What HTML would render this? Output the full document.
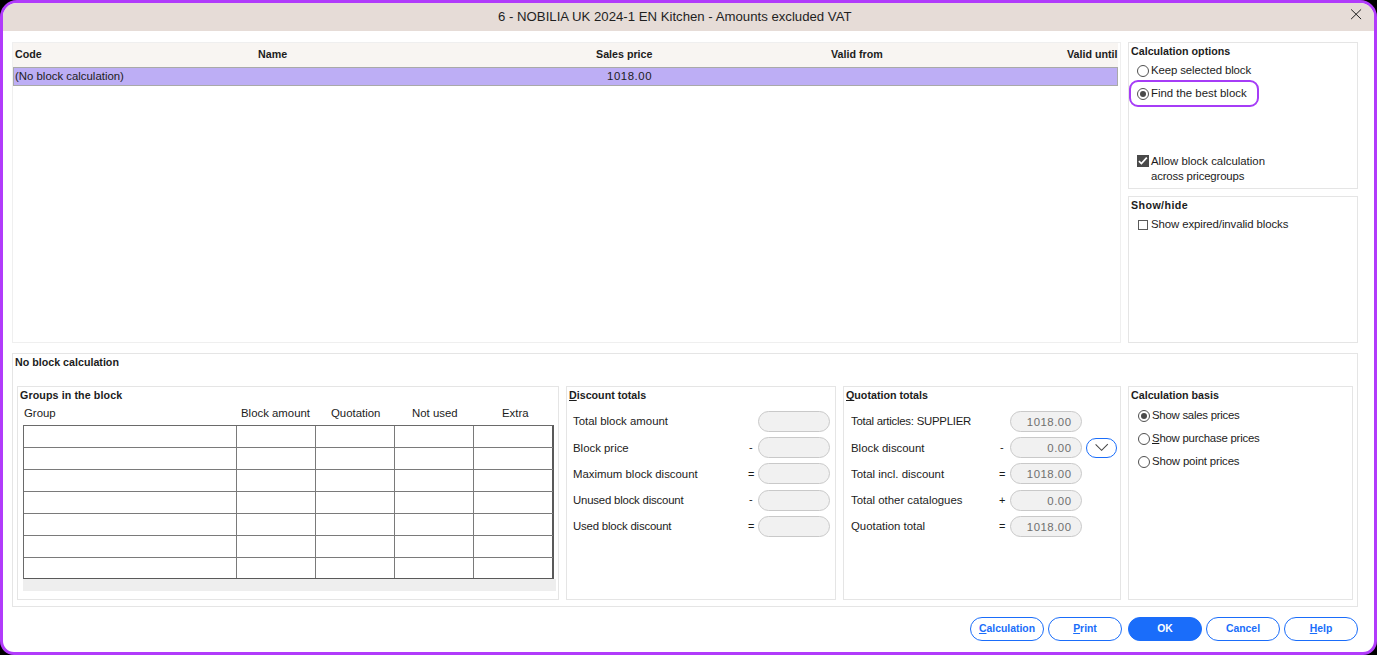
<!DOCTYPE html>
<html><head><meta charset="utf-8">
<style>
*{box-sizing:border-box;margin:0;padding:0}
html,body{width:1377px;height:655px;overflow:hidden;background:#000}
body{font-family:"Liberation Sans",sans-serif;color:#1c1c1c;font-size:11.4px;position:relative}
.dlg{position:absolute;left:0;top:0;width:1377px;height:655px;border:3px solid #b13bfb;border-radius:17px 17px 14px 14px;background:#fff;overflow:hidden}
.a{position:absolute;white-space:nowrap}
.title{position:absolute;left:0;top:0;width:1371px;height:28px;background:#e6dcd7}
.ttl{position:absolute;top:6px;left:495px;font-size:13.2px;color:#1f1f1f;line-height:15px}
.pnl{position:absolute;border:1px solid #e5e5e5}
.b{font-weight:bold;font-size:10.7px}
u{text-decoration-skip-ink:none}
.hdr{position:absolute;left:10px;top:40px;width:1105px;height:24px;background:#f8f5f2}
.sel{position:absolute;left:10px;top:64px;width:1105px;height:19px;background:#bdaef5;border:1px solid #a9a9a9}
.radio{position:absolute;width:12px;height:12px;border:1px solid #505050;border-radius:50%;background:#fff}
.radio.on::after{content:"";position:absolute;left:2px;top:2px;width:6px;height:6px;border-radius:50%;background:#4a4a4a}
.chk{position:absolute;width:11px;height:11px;border:1px solid #3a3a3a;background:#fff}
.inp{position:absolute;width:72px;height:21px;border:1px solid #c9c9c9;border-radius:11px;background:#f1f1f1;color:#6f6f6f;text-align:right;padding-right:9.5px;line-height:21px;font-size:11.4px;letter-spacing:0.5px}
.op{position:absolute;font-size:11px}
.btn{position:absolute;top:614px;width:74px;height:24px;border:1px solid #1a6dfa;border-radius:12px;color:#1a6dfa;font-weight:bold;text-align:center;line-height:22px;font-size:10.4px;background:#fff}
.btn.pri{background:#1a6dfa;color:#fff}
.grid{position:absolute;left:20px;top:422px;width:531px;height:154px;border-left:1px solid #6a6a6a;border-top:1px solid #6a6a6a;border-right:2px solid #5a5a5a;border-bottom:1px solid #5a5a5a}
.hl{position:absolute;left:0;width:529px;height:1px;background:#7a7a7a}
.vl{position:absolute;top:0;width:1px;height:152px;background:#7a7a7a}
</style></head><body>
<div class="dlg">
  <div class="title"><div class="ttl">6 - NOBILIA UK 2024-1 EN Kitchen - Amounts excluded VAT</div>
    <svg class="a" style="left:1347px;top:5px" width="12" height="12" viewBox="0 0 12 12"><path d="M1.1 1.4L11.1 11.1M11.1 1.4L1.1 11.1" stroke="#1e1e1e" stroke-width="1"/></svg>
  </div>

  <!-- top table -->
  <div class="pnl" style="left:9px;top:39px;width:1109px;height:301px;border-color:#efefef"></div>
  <div class="hdr"></div>
  <div class="a b" style="left:12px;top:45px">Code</div>
  <div class="a b" style="left:255px;top:45px">Name</div>
  <div class="a b" style="left:593px;top:45px">Sales price</div>
  <div class="a b" style="left:828px;top:45px">Valid from</div>
  <div class="a b" style="left:1064px;top:45px">Valid until</div>
  <div class="sel"></div>
  <div class="a" style="left:12px;top:67px">(No block calculation)</div>
  <div class="a" style="left:604px;top:67px;letter-spacing:0.55px">1018.00</div>

  <!-- calc options -->
  <div class="pnl" style="left:1125px;top:39px;width:230px;height:147px"></div>
  <div class="a b" style="left:1128px;top:42px">Calculation options</div>
  <div class="radio" style="left:1134px;top:62px"></div>
  <div class="a" style="left:1148px;top:61px;letter-spacing:-0.1px">Keep selected block</div>
  <div class="a" style="left:1126px;top:77px;width:130px;height:27px;border:2px solid #a63cf7;border-radius:9px"></div>
  <div class="radio on" style="left:1134px;top:85px"></div>
  <div class="a" style="left:1148px;top:84px">Find the best block</div>
  <div class="chk" style="left:1134px;top:152px;width:12px;height:12px;border-color:#4a4a4a;background:#4a4a4a"></div>
  <svg class="a" style="left:1134px;top:152px" width="12" height="12" viewBox="0 0 12 12"><path d="M1.9 6.2L4.4 8.6L9.8 2.6" stroke="#fff" stroke-width="1.7" fill="none"/></svg>
  <div class="a" style="left:1148px;top:152px">Allow block calculation</div>
  <div class="a" style="left:1148px;top:167px;letter-spacing:-0.17px">across pricegroups</div>

  <!-- show/hide -->
  <div class="pnl" style="left:1125px;top:193px;width:230px;height:147px"></div>
  <div class="a b" style="left:1128px;top:196px;letter-spacing:0.4px">Show/hide</div>
  <div class="chk" style="left:1135px;top:217px;width:10px;height:10px;border-color:#5a5a5a"></div>
  <div class="a" style="left:1148px;top:215px;letter-spacing:-0.1px">Show expired/invalid blocks</div>

  <!-- bottom panel -->
  <div class="pnl" style="left:9px;top:350px;width:1346px;height:254px"></div>
  <div class="a b" style="left:12px;top:353px">No block calculation</div>

  <!-- groups -->
  <div class="pnl" style="left:14px;top:383px;width:542px;height:214px"></div>
  <div class="a b" style="left:17px;top:386px;letter-spacing:0.1px">Groups in the block</div>
  <div class="a" style="left:21px;top:404px">Group</div>
  <div class="a" style="left:238px;top:404px">Block amount</div>
  <div class="a" style="left:328px;top:404px">Quotation</div>
  <div class="a" style="left:409px;top:404px">Not used</div>
  <div class="a" style="left:499px;top:404px">Extra</div>
  <div class="grid">
    <div class="hl" style="top:21px"></div>
    <div class="hl" style="top:43px"></div>
    <div class="hl" style="top:65px"></div>
    <div class="hl" style="top:87px"></div>
    <div class="hl" style="top:109px"></div>
    <div class="hl" style="top:131px"></div>
    <div class="vl" style="left:212px"></div>
    <div class="vl" style="left:291px"></div>
    <div class="vl" style="left:370px"></div>
    <div class="vl" style="left:449px"></div>
  </div>
  <div class="a" style="left:20px;top:576px;width:533px;height:12px;background:#eeeeee"></div>

  <!-- discount totals -->
  <div class="pnl" style="left:563px;top:383px;width:270px;height:214px"></div>
  <div class="a b" style="left:566px;top:386px"><u>D</u>iscount totals</div>
  <div class="a" style="left:570px;top:412px">Total block amount</div>
  <div class="a" style="left:570px;top:439px">Block price</div>
  <div class="a" style="left:570px;top:465px">Maximum block discount</div>
  <div class="a" style="left:570px;top:491px;letter-spacing:-0.2px">Unused block discount</div>
  <div class="a" style="left:570px;top:517px;letter-spacing:-0.19px">Used block discount</div>
  <div class="op" style="left:746px;top:438px">-</div>
  <div class="op" style="left:745px;top:465px">=</div>
  <div class="op" style="left:746px;top:490px">-</div>
  <div class="op" style="left:745px;top:517px">=</div>
  <div class="inp" style="left:755px;top:408px"></div>
  <div class="inp" style="left:755px;top:434px"></div>
  <div class="inp" style="left:755px;top:460px"></div>
  <div class="inp" style="left:755px;top:487px"></div>
  <div class="inp" style="left:755px;top:513px"></div>

  <!-- quotation totals -->
  <div class="pnl" style="left:840px;top:383px;width:278px;height:214px"></div>
  <div class="a b" style="left:843px;top:386px"><u>Q</u>uotation totals</div>
  <div class="a" style="left:848px;top:412px;letter-spacing:-0.25px">Total articles: SUPPLIER</div>
  <div class="a" style="left:848px;top:439px">Block discount</div>
  <div class="a" style="left:848px;top:465px">Total incl. discount</div>
  <div class="a" style="left:848px;top:491px">Total other catalogues</div>
  <div class="a" style="left:848px;top:517px">Quotation total</div>
  <div class="op" style="left:997px;top:438px">-</div>
  <div class="op" style="left:996px;top:465px">=</div>
  <div class="op" style="left:996px;top:491px">+</div>
  <div class="op" style="left:996px;top:517px">=</div>
  <div class="inp" style="left:1007px;top:408px">1018.00</div>
  <div class="inp" style="left:1007px;top:434px">0.00</div>
  <div class="inp" style="left:1007px;top:460px">1018.00</div>
  <div class="inp" style="left:1007px;top:487px">0.00</div>
  <div class="inp" style="left:1007px;top:513px">1018.00</div>
  <div class="a" style="left:1083px;top:435px;width:31px;height:20px;border:1px solid #1a6dfa;border-radius:10px"></div>
  <svg class="a" style="left:1092px;top:440px" width="14" height="8" viewBox="0 0 14 8"><path d="M0.6 1.4L6.6 7.3L12.8 1.2" stroke="#454545" stroke-width="1.05" fill="none"/></svg>

  <!-- calc basis -->
  <div class="pnl" style="left:1125px;top:383px;width:225px;height:214px"></div>
  <div class="a b" style="left:1128px;top:386px">Calculation basis</div>
  <div class="radio on" style="left:1135px;top:407px"></div>
  <div class="a" style="left:1149px;top:406px;letter-spacing:-0.25px">Show sales prices</div>
  <div class="radio" style="left:1135px;top:430px"></div>
  <div class="a" style="left:1149px;top:429px;letter-spacing:-0.23px"><u>S</u>how purchase prices</div>
  <div class="radio" style="left:1135px;top:453px"></div>
  <div class="a" style="left:1149px;top:452px;letter-spacing:-0.15px">Show point prices</div>

  <!-- buttons -->
  <div class="btn" style="left:967px"><u>C</u>alculation</div>
  <div class="btn" style="left:1045px"><u>P</u>rint</div>
  <div class="btn pri" style="left:1125px">OK</div>
  <div class="btn" style="left:1203px">Cancel</div>
  <div class="btn" style="left:1281px"><u>H</u>elp</div>
</div>
</body></html>
